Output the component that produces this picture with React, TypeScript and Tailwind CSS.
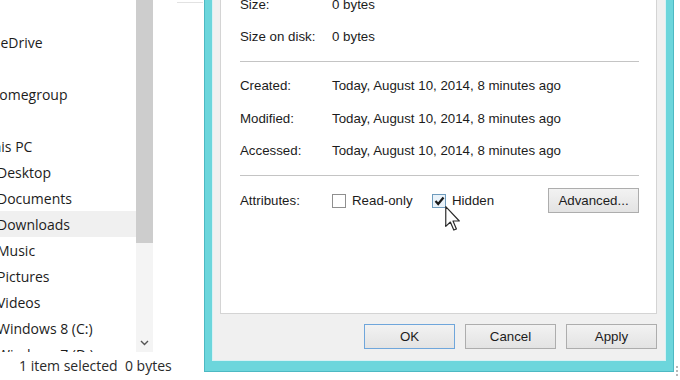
import React from 'react'

const navItems: { label: string; cls: string; selected?: boolean }[] = [
  { label: '', cls: '' },
  { label: 'OneDrive', cls: '-ml-[19px]' },
  { label: '', cls: '' },
  { label: 'Homegroup', cls: '-ml-[11px]' },
  { label: '', cls: '' },
  { label: 'This PC', cls: '-ml-[15px]' },
  { label: 'Desktop', cls: '-ml-[3px]' },
  { label: 'Documents', cls: '-ml-[3px]' },
  { label: 'Downloads', cls: '-ml-[3px]', selected: true },
  { label: 'Music', cls: '-ml-[3px]' },
  { label: 'Pictures', cls: '-ml-[3px]' },
  { label: 'Videos', cls: '-ml-[3px]' },
  { label: 'Windows 8 (C:)', cls: '-ml-[3px]' },
  { label: 'Windows 7 (D:)', cls: '-ml-[3px]' },
]

const dates = [
  ['Created:', 'Today, August 10, 2014, 8 minutes ago'],
  ['Modified:', 'Today, August 10, 2014, 8 minutes ago'],
  ['Accessed:', 'Today, August 10, 2014, 8 minutes ago'],
]

function Button({ label, primary }: { label: string; primary?: boolean }) {
  return (
    <div
      className={
        primary
          ? 'w-[91px] h-[25px] flex items-center justify-center border border-[#6fa6db] bg-gradient-to-b from-[#f2f2f2] to-[#e3e3e3] text-[13.3px]'
          : 'w-[91px] h-[25px] flex items-center justify-center border border-[#adadad] bg-gradient-to-b from-[#f2f2f2] to-[#e3e3e3] text-[13.3px]'
      }
    >
      {label}
    </div>
  )
}

function Cursor() {
  return (
    <svg className="absolute left-[445px] top-[206px]" width="16" height="25" viewBox="0 0 12 19">
      <path
        d="M0.5 0.5 L0.5 15.5 L4 12.2 L6.6 18.3 L8.6 17.4 L6 11.4 L10.8 11.4 Z"
        fill="#fff"
        stroke="#2a2a2a"
        strokeWidth="0.9"
        strokeLinejoin="round"
      />
    </svg>
  )
}

export default function App() {
  return (
    <div
      className="relative w-[680px] h-[380px] overflow-hidden bg-white flex text-[#1c1c1c]"
      style={{ fontFamily: '"Liberation Sans", Arial, sans-serif' }}
    >
      {/* explorer */}
      <div className="w-[204px] flex flex-col shrink-0">
        <div className="h-[352px] flex">
          <div
            className="w-[136px] overflow-hidden pt-[3px] text-[14px]"
            style={{ fontFamily: '"Open Sans", "Noto Sans", sans-serif' }}
          >
            {navItems.map((item, i) => (
              <div
                key={i}
                className={
                  item.selected
                    ? 'h-[26px] flex items-center bg-[#f0f0f0] whitespace-nowrap'
                    : 'h-[26px] flex items-center whitespace-nowrap'
                }
              >
                <span className={item.cls}>{item.label}</span>
              </div>
            ))}
          </div>
          <div className="w-[17px] bg-[#f4f4f4] flex flex-col">
            <div className="h-[243px] bg-[#cdcdcd]" />
            <div className="flex-1" />
            <div className="h-[16px] flex items-center justify-center mb-[1px]">
              <svg width="9" height="6" viewBox="0 0 9 6">
                <path d="M1 1 L4.5 4.5 L8 1" fill="none" stroke="#555" strokeWidth="1.4" />
              </svg>
            </div>
          </div>
          <div className="flex-1">
            <div className="ml-[24px] w-[26px] h-[3px] border-b border-[#e2e2e2]" />
          </div>
        </div>
        <div
          className="h-[28px] flex items-center pl-[19px] text-[14px] text-[#2a2a2a] pb-[2px]"
          style={{ fontFamily: '"Open Sans", "Noto Sans", sans-serif' }}
        >
          1 item selected&nbsp;&nbsp;0 bytes
        </div>
      </div>

      {/* properties dialog */}
      <div className="w-[470px] h-[372px] shrink-0 border-x border-b border-[#4db9c3] bg-[#6cd6dc] px-[7px] pb-[10px] flex">
        <div className="flex-1 flex flex-col bg-[#f0f0f0] border-x border-b border-[#d8f1f4] pl-[7px] pr-[8px]">
          <div className="flex-1 bg-white border-x border-b border-[#d4d4d4] pl-[19px] pr-[17px] flex flex-col text-[13.3px]">
            <div className="-mt-[5px] h-[20px] flex items-center">
              <span className="w-[92px]">Size:</span>
              <span>0 bytes</span>
            </div>
            <div className="mt-[12px] h-[20px] flex items-center">
              <span className="w-[92px]">Size on disk:</span>
              <span>0 bytes</span>
            </div>
            <div className="mt-[14px] h-px bg-[#c4c4c4]" />
            <div className="mt-[14px] flex flex-col gap-[12.5px]">
              {dates.map(([k, v]) => (
                <div key={k} className="h-[20px] flex items-center">
                  <span className="w-[92px]">{k}</span>
                  <span>{v}</span>
                </div>
              ))}
            </div>
            <div className="mt-[14px] h-px bg-[#c4c4c4]" />
            <div className="mt-[12px] h-[25px] flex items-center">
              <span className="w-[92px]">Attributes:</span>
              <div className="flex items-center w-[100px]">
                <div className="w-[14px] h-[14px] border border-[#8f8f8f] bg-white" />
                <span className="ml-[6px]">Read-only</span>
              </div>
              <div className="flex items-center">
                <div className="w-[14px] h-[14px] border border-[#6e9bbd] bg-[#eaf3fa] flex items-center justify-center">
                  <svg width="11" height="10" viewBox="0 0 11 10">
                    <path d="M1.5 5 L4.2 8 L9.5 1.5" fill="none" stroke="#1a1a1a" strokeWidth="2.2" />
                  </svg>
                </div>
                <span className="ml-[6px]">Hidden</span>
              </div>
              <div className="ml-auto">
                <Button label="Advanced..." />
              </div>
            </div>
          </div>
          <div className="mt-[10px] mb-[11px] flex justify-end gap-[10px]">
            <Button label="OK" primary />
            <Button label="Cancel" />
            <Button label="Apply" />
          </div>
        </div>
      </div>

      {/* resize grip */}
      <div className="flex-1 flex items-end justify-start pb-[3px] pl-[1px]">
        <svg width="5" height="12" viewBox="0 0 5 12">
          <rect x="1" y="1" width="2" height="2" fill="#b8b8b8" />
          <rect x="1" y="5" width="2" height="2" fill="#b8b8b8" />
          <rect x="1" y="9" width="2" height="2" fill="#b8b8b8" />
        </svg>
      </div>

      <Cursor />
    </div>
  )
}
